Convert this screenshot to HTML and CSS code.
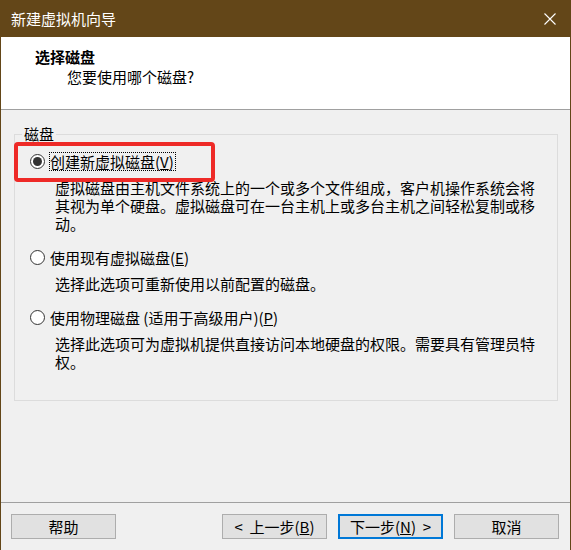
FILE: index.html
```html
<!DOCTYPE html>
<html lang="zh-CN">
<head>
<meta charset="utf-8">
<title>新建虚拟机向导</title>
<link rel="stylesheet" href="styles.css">
</head>
<body>
<div class="window">
  <div class="titlebar">
    <span class="title">新建虚拟机向导</span>
    <svg class="close" width="12" height="12" viewBox="0 0 12 12"><path d="M0.5 0.5 L11.5 11.5 M11.5 0.5 L0.5 11.5" stroke="#fff" stroke-width="1.1" fill="none"/></svg>
  </div>
  <div class="header">
    <div class="h-title">选择磁盘</div>
    <div class="h-sub">您要使用哪个磁盘?</div>
  </div>
  <div class="content">
    <fieldset class="group">
      <legend class="legend">磁盘</legend>
      <div class="option first">
        <span class="radio checked"></span>
        <span class="label focus">创建新虚拟磁盘(<u>V</u>)</span>
        <span class="mark"></span>
      </div>
      <p class="desc">虚拟磁盘由主机文件系统上的一个或多个文件组成，客户机操作系统会将其视为单个硬盘。虚拟磁盘可在一台主机上或多台主机之间轻松复制或移动。</p>
      <div class="option">
        <span class="radio"></span>
        <span class="label">使用现有虚拟磁盘(<u>E</u>)</span>
      </div>
      <p class="desc">选择此选项可重新使用以前配置的磁盘。</p>
      <div class="option">
        <span class="radio"></span>
        <span class="label">使用物理磁盘 (适用于高级用户)(<u>P</u>)</span>
      </div>
      <p class="desc">选择此选项可为虚拟机提供直接访问本地硬盘的权限。需要具有管理员特权。</p>
    </fieldset>
  </div>
  <div class="footer">
    <button class="btn">帮助</button>
    <div class="nav">
      <button class="btn">&lt;&nbsp; 上一步(<u>B</u>)</button>
      <button class="btn default">下一步(<u>N</u>) &nbsp;&gt;</button>
      <button class="btn">取消</button>
    </div>
  </div>
</div>
</body>
</html>
```

FILE: styles.css
```css
* { box-sizing: border-box; }
html, body { margin: 0; padding: 0; background: #f0f0f0; }
body {
  font-family: "Noto Sans CJK SC", "Noto Sans", sans-serif;
  font-size: 15px;
  line-height: 18px;
  color: #000;
}
.window {
  width: 571px;
  height: 550px;
  border-left: 1px solid #634618;
  border-right: 1px solid #634618;
  display: flex;
  flex-direction: column;
  background: #f0f0f0;
}
.titlebar {
  height: 37px;
  flex: none;
  background: #634618;
  color: #fff;
  display: flex;
  align-items: center;
  justify-content: space-between;
  padding: 0 14px 0 10px;
}
.title { font-size: 15px; }
.close { display: block; }
.header {
  height: 73px;
  flex: none;
  background: #fff;
  border-bottom: 1px solid #a0a0a0;
  padding: 11px 0 0 34px;
}
.h-title { font-weight: bold; }
.h-sub { margin: 2px 0 0 32px; }
.content {
  flex: 1;
  padding: 15px 12px 0 13px;
}
.group {
  margin: 0;
  padding: 0;
  min-width: 0;
  height: 276px;
  border: 1px solid #dcdcdc;
}
.legend {
  margin-left: 7px;
  padding: 0 2px;
  line-height: 18px;
}
.option {
  position: relative;
  display: flex;
  align-items: center;
  padding-left: 15px;
  margin-top: 15px;
}
.option.first { margin-top: 9px; }
.radio {
  width: 15px;
  height: 15px;
  border: 1px solid #333;
  border-radius: 50%;
  background: #fff;
  flex: none;
  display: flex;
  align-items: center;
  justify-content: center;
  margin-right: 4px;
}
.radio.checked::after {
  content: "";
  width: 9px;
  height: 9px;
  border-radius: 50%;
  background: #333;
}
.label {
  border: 1px dotted transparent;
  line-height: 17px;
  padding: 0 1px 0 0;
}
.label.focus { border-color: #000; }
.mark {
  position: absolute;
  left: -1px;
  top: -10px;
  width: 201px;
  height: 40px;
  border: 4px solid #ee2a27;
  border-radius: 4px;
}
.desc {
  margin: 8px 0 0 40px;
  width: 490px;
}
.footer {
  flex: none;
  height: 48px;
  border-top: 1px solid #a0a0a0;
  display: flex;
  justify-content: space-between;
  align-items: flex-start;
  padding: 11px 11px 0 10px;
}
.nav { display: flex; gap: 11px; }
.btn {
  width: 105px;
  height: 25px;
  background: #e1e1e1;
  border: 1px solid #adadad;
  font-family: inherit;
  font-size: 15px;
  line-height: 18px;
  color: #000;
  padding: 0;
}
.btn.default { border: 2px solid #0078d7; }
```
